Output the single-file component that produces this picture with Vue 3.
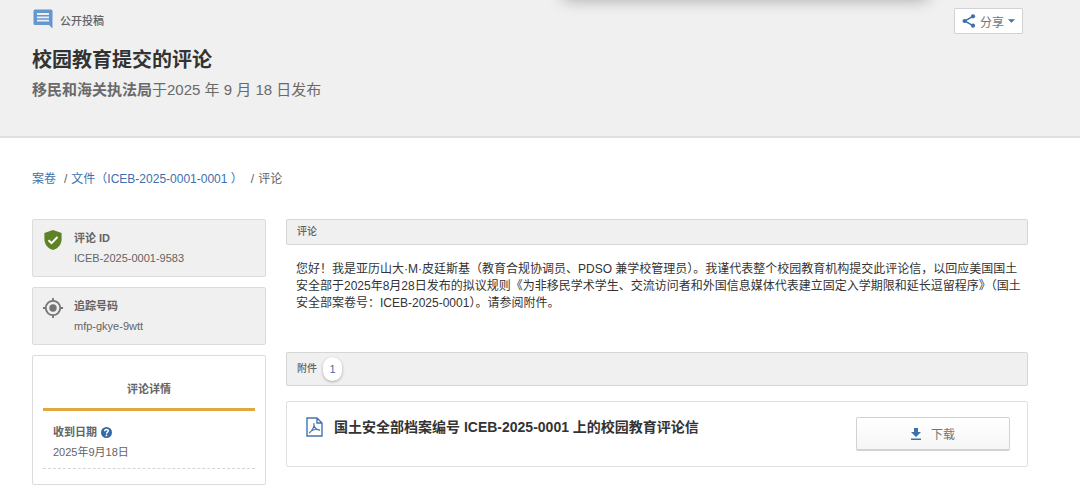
<template>
    <div class="page">
        <header class="page-header">
            <div class="top-shadow"></div>
            <div class="header-info">
                <div class="doc-type">
                    <svg class="type-icon" viewBox="0 0 20 20" width="20" height="20">
                        <path fill="#6497d0" d="M2 .5h16A1.5 1.5 0 0 1 19.500 2v17.500L16 16H2A1.500 1.500 0 0 1 .5 14.500V2A1.500 1.500 0 0 1 2 .5z" />
                        <path stroke="#f0f0f0" stroke-width="1.800" d="M4 5h12M4 8.300h12M4 11.600h12" />
                    </svg>
                    <span>公开投稿</span>
                </div>
                <h1>校园教育提交的评论</h1>
                <p class="posted"><strong>移民和海关执法局</strong>于2025 年 9 月 18 日发布</p>
            </div>
            <button class="share-btn" type="button">
                <svg viewBox="0 0 14 14" width="14" height="14">
                    <path d="M11 2.300 2.600 7l8.400 4.700" fill="none" stroke="#3d70ad" stroke-width="1.500" />
                    <circle cx="11" cy="2.300" r="2.100" fill="#3d70ad" />
                    <circle cx="2.600" cy="7" r="2.100" fill="#3d70ad" />
                    <circle cx="11" cy="11.700" r="2.100" fill="#3d70ad" />
                </svg>
                <span>分享</span>
                <svg viewBox="0 0 8 4" width="7" height="4">
                    <path d="M0 0h8L4 4z" fill="#3d70ad" />
                </svg>
            </button>
        </header>

        <nav class="breadcrumb">
            <a href="#">案卷</a>
            <span class="sep">/</span>
            <a href="#">文件（ICEB-2025-0001-0001 ）</a>
            <span class="sep">/</span>
            <span>评论</span>
        </nav>

        <div class="content">
            <aside class="sidebar">
                <div class="id-card">
                    <svg viewBox="0 0 20 20" width="20" height="20">
                        <path fill="#5f8226" d="M10 0 18.600 3v6.200c0 4.900-3.400 9.200-8.600 10.800C4.800 18.400 1.400 14.100 1.400 9.200V3z" />
                        <path fill="none" stroke="#fff" stroke-width="2" d="m5.500 10.300 3 2.900 6-6.200" />
                    </svg>
                    <div>
                        <h2>评论 ID</h2>
                        <p>ICEB-2025-0001-9583</p>
                    </div>
                </div>

                <div class="id-card">
                    <svg viewBox="0 0 20 20" width="20" height="20">
                        <circle cx="10" cy="10" r="3.700" fill="#757575" />
                        <circle cx="10" cy="10" r="7.200" fill="none" stroke="#757575" stroke-width="1.800" />
                        <path stroke="#757575" stroke-width="1.800" d="M10 0v3M10 17v3M0 10h3M17 10h3" />
                    </svg>
                    <div>
                        <h2>追踪号码</h2>
                        <p>mfp-gkye-9wtt</p>
                    </div>
                </div>

                <div class="details-card">
                    <h2 class="details-title">评论详情</h2>
                    <div class="detail-row">
                        <h3>
                            收到日期
                            <svg viewBox="0 0 12 12" width="11" height="11">
                                <circle cx="6" cy="6" r="6" fill="#3468a8" />
                                <path fill="none" stroke="#fff" stroke-width="1.600" d="M4 4.700C4 2 8.100 2.200 8 4.400 7.900 5.700 6 5.600 6 7.300" />
                                <circle cx="6" cy="9.200" r="1" fill="#fff" />
                            </svg>
                        </h3>
                        <p>2025年9月18日</p>
                    </div>
                </div>
            </aside>

            <main class="main">
                <h2 class="bar">评论</h2>
                <p class="comment">您好！我是亚历山大·M·皮廷斯基（教育合规协调员、PDSO 兼学校管理员）。我谨代表整个校园教育机构提交此评论信，以回应美国国土安全部于2025年8月28日发布的拟议规则《为非移民学术学生、交流访问者和外国信息媒体代表建立固定入学期限和延长逗留程序》（国土安全部案卷号：ICEB-2025-0001）。请参阅附件。</p>

                <h2 class="bar attachments">附件 <span class="count">1</span></h2>
                <div class="file-card">
                    <svg class="file-icon" viewBox="0 0 17 20" width="17" height="20">
                        <path fill="none" stroke="#4274b3" stroke-width="1.400" d="M1 1h10l5 5v13H1zM11 1v5h5" />
                        <path fill="none" stroke="#4274b3" stroke-width="1.200" stroke-linecap="round" d="M3.500 15.800C5.800 14.200 8.700 9.800 7.900 6.500M8 8.500c.9 2.700 2.500 4.300 5.600 4.700M5.800 13.400c2.200-.9 4.600-1.200 7.600-.6" />
                    </svg>
                    <h3>国土安全部档案编号 ICEB-2025-0001 上的校园教育评论信</h3>
                    <button class="download-btn" type="button">
                        <svg viewBox="0 0 10 12" width="10" height="12">
                            <path fill="#3d70ad" d="M3 0h4v4h3L5 9 0 4h3zM0 10.500h10V12H0z" />
                        </svg>
                        下载
                    </button>
                </div>
            </main>
        </div>
    </div>
</template>

<script setup>
</script>

<style>
    body {
        background: #fff;
    }
</style>

<style scoped>
    .page {
        color: #646464;
        font-family: "Liberation Sans", "Noto Sans CJK SC", sans-serif;
        font-size: 12px;
        line-height: 16px;
    }

    h1, h2, h3, p {
        margin: 0;
    }

    a {
        color: #3d70ad;
        text-decoration: none;
    }

    svg {
        flex: none;
    }

    button {
        font-family: inherit;
        font-size: 12px;
        color: #757575;
        cursor: pointer;
    }

    /* Header */
    .page-header {
        position: relative;
        display: flex;
        justify-content: space-between;
        align-items: flex-start;
        padding: 8px 57px 35px 32px;
        background: #f0f0f0;
        border-bottom: 2px solid #e0e0e0;
        overflow: hidden;
    }

    .top-shadow {
        position: absolute;
        top: -20px;
        left: 52%;
        right: 14%;
        height: 20px;
        border-radius: 8px;
        box-shadow: 0 0 16px rgba(0, 0, 0, 0.3);
    }

    .doc-type {
        display: flex;
        align-items: center;
        gap: 7px;
        font-size: 11px;
        font-weight: 500;
    }

    .doc-type span {
        padding-top: 5px;
    }

    .type-icon {
        margin-left: 1px;
    }

    h1 {
        margin-top: 16px;
        font-size: 20px;
        line-height: 30px;
        color: #333;
    }

    .posted {
        margin-top: 4px;
        font-size: 15px;
        line-height: 22px;
        color: #6a6a6a;
    }

    .share-btn {
        display: flex;
        align-items: center;
        gap: 4px;
        height: 26px;
        padding: 0 7px;
        background: #fff;
        border: 1px solid #d2d2d2;
        border-radius: 1px;
    }

    /* Breadcrumb */
    .breadcrumb {
        display: flex;
        padding: 33px 32px 0;
    }

    .sep {
        margin: 0 4px 0 8px;
    }

    .content {
        display: grid;
        grid-template-columns: 234px 1fr;
        gap: 20px;
        padding: 32px 52px 4px 32px;
    }

    /* Sidebar */
    .sidebar {
        display: flex;
        flex-direction: column;
        gap: 10px;
    }

    .sidebar h2,
    .sidebar h3 {
        font-size: 11px;
        line-height: 16px;
    }

    .sidebar p {
        margin-top: 4px;
        font-size: 11px;
    }

    .id-card {
        display: flex;
        gap: 11px;
        padding: 10px;
        background: #f0f0f0;
        border: 1px solid #dcdcdc;
        border-radius: 2px;
    }

    .details-card {
        padding: 25px 10px 15px;
        border: 1px solid #dcdcdc;
        border-radius: 2px;
    }

    .details-title {
        padding-bottom: 11px;
        border-bottom: 3px solid #dfa940;
        text-align: center;
    }

    .detail-row {
        padding: 13px 10px 8px;
        border-bottom: 1px dashed #d6d6d6;
    }

    .detail-row h3 {
        display: flex;
        align-items: center;
        gap: 4px;
    }

    /* Main column */
    .bar {
        padding: 4px 10px;
        background: #f0f0f0;
        border: 1px solid #d6d6d6;
        border-radius: 2px;
        font-size: 10px;
        font-weight: 500;
        line-height: 16px;
    }

    .comment {
        padding: 16px 0 40px 10px;
        line-height: 17px;
        color: #333;
    }

    .attachments {
        display: flex;
        align-items: center;
        gap: 6px;
    }

    .count {
        min-width: 19px;
        border-radius: 12px;
        background: #fff;
        box-shadow: 0 1px 3px rgba(0, 0, 0, 0.3);
        color: #3d70ad;
        font-size: 11px;
        font-weight: 400;
        line-height: 24px;
        text-align: center;
    }

    .file-card {
        display: flex;
        align-items: flex-start;
        gap: 11px;
        margin-top: 15px;
        padding: 15px 17px 15px 19px;
        border: 1px solid #e0e0e0;
        border-radius: 2px;
    }

    .file-card h3 {
        flex: 1;
        font-size: 14px;
        line-height: 20px;
        color: #333;
    }

    .download-btn {
        display: flex;
        align-items: center;
        justify-content: center;
        gap: 10px;
        width: 154px;
        height: 34px;
        border: 1px solid #d2d2d2;
        border-bottom-width: 2px;
        border-radius: 2px;
        background: linear-gradient(#fff, #f6f6f6);
    }
</style>
